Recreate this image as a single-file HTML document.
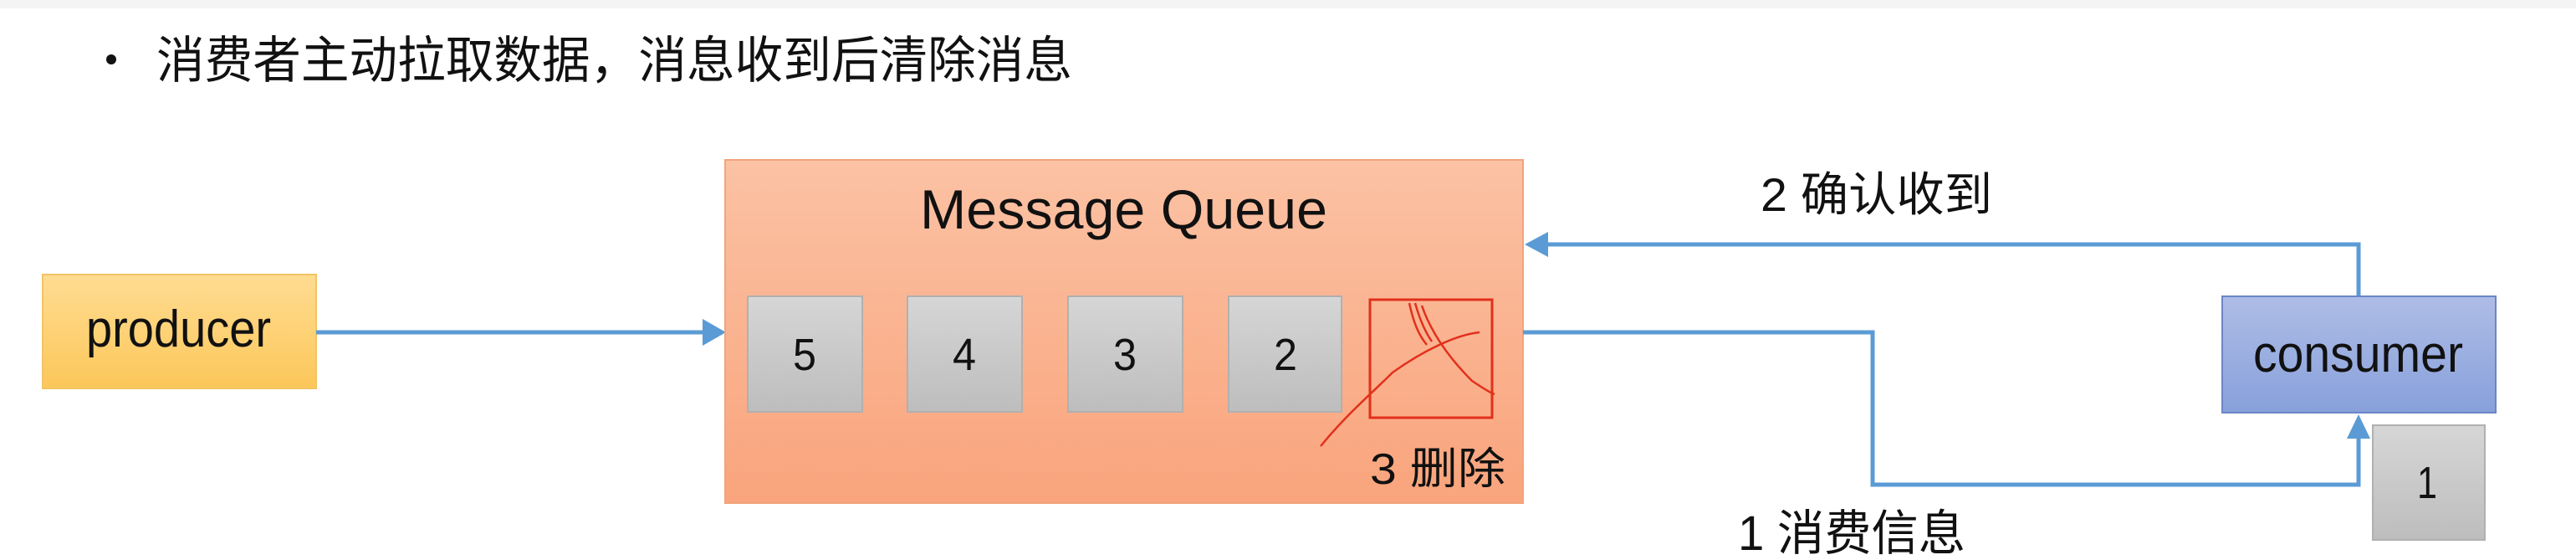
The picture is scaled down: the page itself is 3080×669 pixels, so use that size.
<!DOCTYPE html>
<html><head><meta charset="utf-8"><style>
html,body{margin:0;padding:0;background:#fff;}
svg{display:block;}
text{font-family:"Liberation Sans","Noto Sans CJK SC",sans-serif;fill:#111;}
</style></head><body>
<svg width="3080" height="669" viewBox="0 0 3080 669" xmlns="http://www.w3.org/2000/svg">
<defs>
<linearGradient id="gy" x1="0" y1="0" x2="0" y2="1"><stop offset="0" stop-color="#ffdc92"/><stop offset="1" stop-color="#fcc75a"/></linearGradient>
<linearGradient id="go" x1="0" y1="0" x2="0" y2="1"><stop offset="0" stop-color="#fbc2a4"/><stop offset="1" stop-color="#f9a47c"/></linearGradient>
<linearGradient id="gg" x1="0" y1="0" x2="0" y2="1"><stop offset="0" stop-color="#d6d6d6"/><stop offset="1" stop-color="#bdbdbd"/></linearGradient>
<linearGradient id="gb" x1="0" y1="0" x2="0" y2="1"><stop offset="0" stop-color="#aebde6"/><stop offset="1" stop-color="#88a0db"/></linearGradient>
</defs>
<rect x="0" y="0" width="3080" height="10" fill="#f4f4f4"/>
<circle cx="133" cy="71" r="6" fill="#111"/>
<text x="187" y="93" font-size="60" textLength="1095" lengthAdjust="spacingAndGlyphs">消费者主动拉取数据，消息收到后清除消息</text>

<rect x="51" y="328" width="327" height="136" fill="url(#gy)" stroke="#f2c464" stroke-width="2"/>
<text x="103" y="414" font-size="62" textLength="221" lengthAdjust="spacingAndGlyphs">producer</text>
<line x1="378" y1="397" x2="850" y2="397" stroke="#5b9bd5" stroke-width="5"/>
<polygon points="868,397 840,381 840,413" fill="#5b9bd5"/>

<rect x="867" y="191" width="954" height="410" fill="url(#go)" stroke="#f2a47c" stroke-width="2"/>
<text x="1100" y="273" font-size="66" textLength="487" lengthAdjust="spacingAndGlyphs">Message Queue</text>

<g stroke="#b0b0b0" stroke-width="2" fill="url(#gg)">
<rect x="894" y="354" width="137" height="138"/>
<rect x="1085" y="354" width="137" height="138"/>
<rect x="1277" y="354" width="137" height="138"/>
<rect x="1469" y="354" width="135" height="138"/>
<rect x="2837" y="508" width="134" height="137"/>
</g>
<g font-size="54" text-anchor="middle">
<text x="962" y="442" textLength="28" lengthAdjust="spacingAndGlyphs">5</text>
<text x="1153" y="442" textLength="28" lengthAdjust="spacingAndGlyphs">4</text>
<text x="1345" y="442" textLength="28" lengthAdjust="spacingAndGlyphs">3</text>
<text x="1537" y="442" textLength="28" lengthAdjust="spacingAndGlyphs">2</text>
<text x="2902" y="595" textLength="24" lengthAdjust="spacingAndGlyphs">1</text>
</g>

<rect x="1638" y="358" width="146" height="141" fill="none" stroke="#e2301c" stroke-width="3"/>
<g fill="none" stroke="#e2301c" stroke-width="2.5">
<path d="M1579,533 C1610,495 1640,470 1665,445 C1700,420 1740,400 1769,397"/>
<path d="M1700,365 C1712,400 1735,430 1760,455 C1775,465 1783,470 1787,471"/>
<path d="M1685,362 C1690,385 1696,400 1706,412"/>
<path d="M1692,362 C1697,380 1703,395 1712,408"/>
</g>
<text x="1638" y="578" font-size="52" textLength="162" lengthAdjust="spacingAndGlyphs">3 删除</text>

<polyline points="2820,354 2820,292 1840,292" fill="none" stroke="#5b9bd5" stroke-width="5"/>
<polygon points="1823,292 1851,277 1851,307" fill="#5b9bd5"/>
<text x="2105" y="252" font-size="56" textLength="277" lengthAdjust="spacingAndGlyphs">2 确认收到</text>

<polyline points="1821,397 2239,397 2239,579 2820,579 2820,512" fill="none" stroke="#5b9bd5" stroke-width="5"/>
<polygon points="2820,495 2806,524 2834,524" fill="#5b9bd5"/>
<text x="2078" y="657" font-size="58" textLength="272" lengthAdjust="spacingAndGlyphs">1 消费信息</text>

<rect x="2657" y="354" width="327" height="139" fill="url(#gb)" stroke="#6c86c6" stroke-width="2"/>
<text x="2694" y="444" font-size="62" textLength="251" lengthAdjust="spacingAndGlyphs">consumer</text>
</svg>
</body></html>
